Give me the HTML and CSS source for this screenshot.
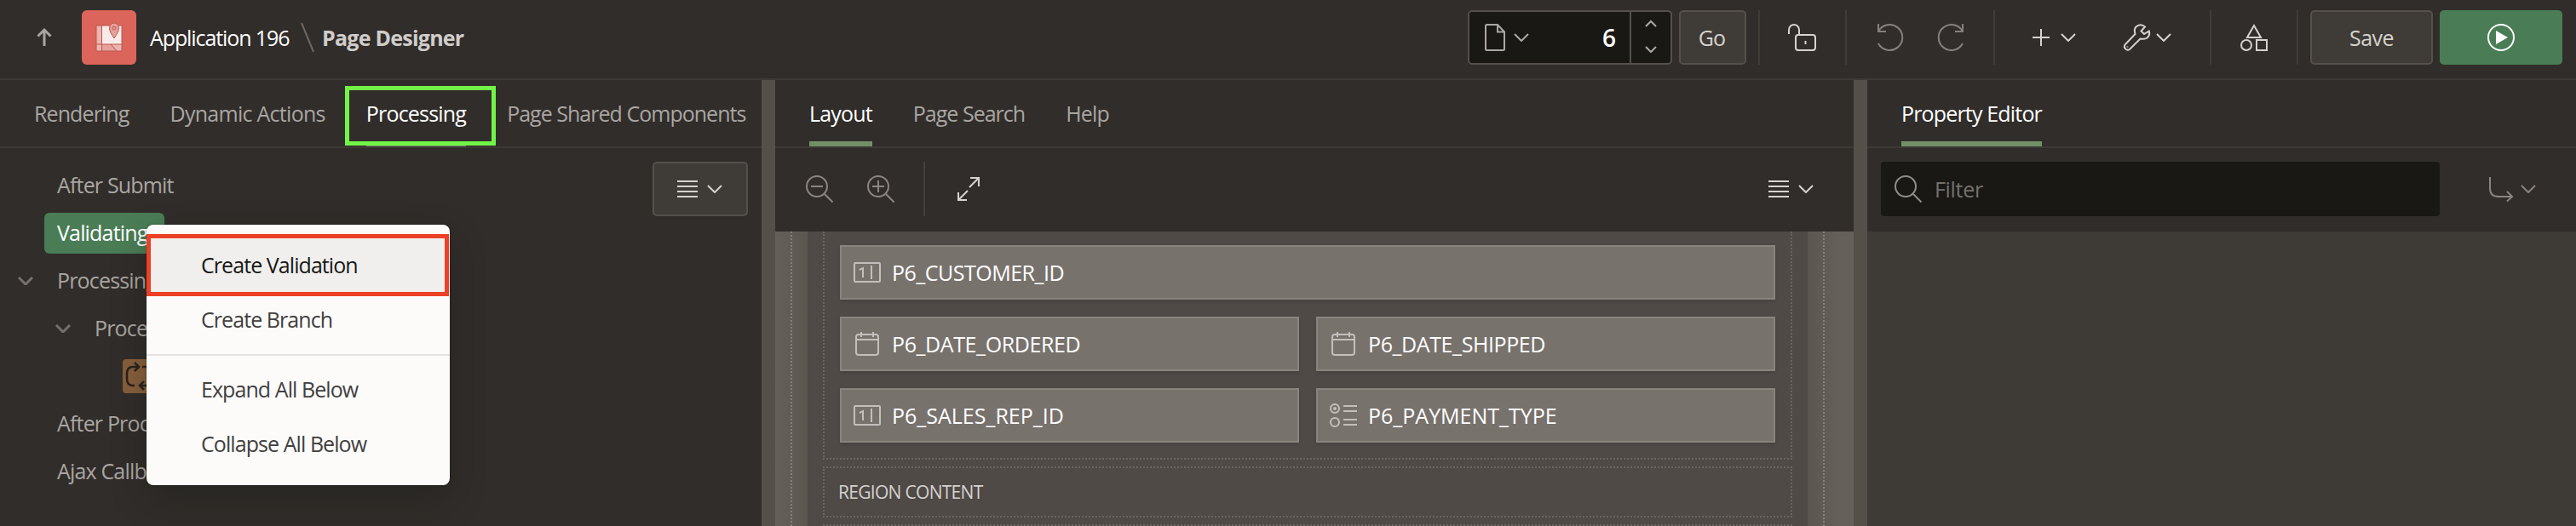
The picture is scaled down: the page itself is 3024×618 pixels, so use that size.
FILE: index.html
```html
<!DOCTYPE html>
<html lang="en">
<head>
<meta charset="utf-8">
<title>Page Designer</title>
<link rel="stylesheet" href="styles.css">
</head>
<body>
<svg class="defs" aria-hidden="true">
  <symbol id="chevron" viewBox="0 0 18 10"><path d="M1 1l8 8 8-8"/></symbol>
  <symbol id="menu" viewBox="0 0 24 20"><path d="M0 1h24M0 7h24M0 13h24M0 19h24"/></symbol>
  <symbol id="number" viewBox="0 0 32 24"><rect x="1" y="1" width="30" height="22" rx="1"/><path d="M7 9l4-2v11M21 4v16"/></symbol>
  <symbol id="calendar" viewBox="0 0 28 28"><rect x="1" y="3" width="26" height="24" rx="3"/><path d="M1 9h26M7 0v6M21 0v6"/></symbol>
  <symbol id="radios" viewBox="0 0 32 28"><circle cx="6" cy="6" r="5"/><circle cx="6" cy="6" r="1"/><circle cx="6" cy="22" r="5"/><path d="M16 3h16M16 9h16M16 19h16M16 25h16"/></symbol>
</svg>
<header class="header">
  <svg class="icon up" width="18" height="22" viewBox="0 0 18 22"><path d="M9 21V2M1.5 9.500L9 2l7.500 7.500"/></svg>
  <span class="app-icon">
    <svg width="32" height="36" viewBox="0 0 32 36">
      <path class="map-soft" d="M1 5h6v22H1zM1 27h30v8H1z"/><path class="map-light" d="M7 5h24v22H7z"/>
      <path class="map-mid" d="M8 27h10l8 8H8z"/>
      <path class="map-line" d="M1 5h30v30H1zM7.500 5v30M1 27h30M18 27l7 8"/>
      <path class="map-pin" d="M22 20c-3-5-5.500-8-5.500-12a5.500 6 0 0 1 11 0c0 4-2.500 7-5.500 12z"/><circle class="map-line" cx="22" cy="8" r="2"/>
    </svg>
  </span>
  <span class="crumb">Application 196</span>
  <svg class="slash" width="16" height="36" viewBox="0 0 16 36"><path d="M1 1l14 34"/></svg>
  <strong class="title">Page Designer</strong>
  <div class="tools">
    <div class="page-picker">
      <div class="page-field">
        <svg class="icon" width="24" height="32" viewBox="0 0 24 32"><path d="M1 2.500Q1 1 2.500 1H15l8 8.500v20q0 1.500-1.500 1.500h-19Q1 31 1 29.500zM15 1v8.500h8"/></svg>
        <svg class="icon" width="18" height="10"><use href="#chevron"/></svg>
        <span class="page-number">6</span>
      </div>
      <div class="stepper">
        <svg class="icon" width="14" height="8" viewBox="0 0 14 8"><path d="M1 7l6-6 6 6"/></svg>
        <svg class="icon" width="14" height="8" viewBox="0 0 14 8"><path d="M1 1l6 6 6-6"/></svg>
      </div>
    </div>
    <span class="button go">Go</span>
    <div class="group lock">
      <svg class="icon" width="34" height="32" viewBox="0 0 34 32"><path d="M1 12V7a6 6 0 0 1 12 0v6M20.500 20v4"/><rect x="9" y="13" width="23" height="18" rx="3"/></svg>
    </div>
    <div class="group history">
      <svg class="icon" width="32" height="32" viewBox="0 0 32 32"><path d="M2 0v9h9M2 9A15 15 0 1 1 2 23"/></svg>
      <svg class="icon" width="32" height="32" viewBox="0 0 32 32"><path d="M30 0v9h-9M30 9a15 15 0 1 0 0 14"/></svg>
    </div>
    <div class="group create">
      <svg class="icon" width="20" height="20" viewBox="0 0 20 20"><path d="M10 0v20M0 10h20"/></svg>
      <svg class="icon" width="18" height="10"><use href="#chevron"/></svg>
      <svg class="icon wrench" width="33" height="32" viewBox="0 0 33 32"><path d="M26 3.500c-3-3-7.500-3-10.500 0-2 2-2 5-1 8.500L2.500 24.500a4 4 0 0 0 5.500 5.500l12.500-12.500c4 .8 7 .5 9-2 1.800-2 2-4.500 1.300-7L25 12l-3.500-3.500zM5.500 26.500v1"/></svg>
      <svg class="icon" width="18" height="10"><use href="#chevron"/></svg>
    </div>
    <div class="group shapes">
      <svg class="icon" width="32" height="32" viewBox="0 0 32 32"><path d="M16 2l8 14H8zM19 19h12v12H19z"/><circle cx="7" cy="25" r="6"/></svg>
    </div>
    <div class="group end">
      <span class="button save">Save</span>
      <span class="button run"><svg class="icon" width="32" height="32" viewBox="0 0 32 32"><circle cx="16" cy="16" r="15"/><path class="solid" d="M10 8l14 8-14 8z"/></svg></span>
    </div>
  </div>
</header>
<main class="workspace">
  <section class="panel left">
    <nav class="tabs">
      <span class="tab t-rendering">Rendering</span><span class="tab t-dynamic">Dynamic Actions</span><span class="tab active t-processing">Processing<i class="callout"></i></span><span class="tab t-shared">Page Shared Components</span>
    </nav>
    <div class="tree-area">
      <div class="tree">
        <div class="node"><span class="label">After Submit</span></div>
        <div class="node"><span class="label selected">Validating</span></div>
        <div class="node"><svg class="icon" width="18" height="10"><use href="#chevron"/></svg><span class="label">Processing</span></div>
        <div class="node child"><svg class="icon" width="18" height="10"><use href="#chevron"/></svg><span class="label">Processes</span></div>
        <div class="node leaf"><span class="process"><svg class="icon" width="40" height="40" viewBox="0 0 40 40"><path d="M14 31h-2q-7 0-7-8v-6q0-8 7-8h7M14 4l5 5-5 5M23 9h5q7 0 7 8v6q0 8-7 8h-7M25 26l-5 5 5 5"/></svg></span></div>
        <div class="node"><span class="label">After Processing</span></div>
        <div class="node"><span class="label">Ajax Callback</span></div>
      </div>
      <span class="button tree-menu"><svg class="icon" width="24" height="20"><use href="#menu"/></svg><svg class="icon" width="18" height="10"><use href="#chevron"/></svg></span>
    </div>
    <div class="context-menu">
      <div class="menu-item hover">Create Validation</div>
      <div class="menu-item">Create Branch</div>
      <div class="separator"></div>
      <div class="menu-item">Expand All Below</div>
      <div class="menu-item">Collapse All Below</div>
    </div>
  </section>
  <div class="splitter"></div>
  <section class="panel center">
    <nav class="tabs"><span class="tab active">Layout</span><span class="tab t-search">Page Search</span><span class="tab">Help</span></nav>
    <div class="toolbar">
      <svg class="icon dim" width="32" height="32" viewBox="0 0 32 32"><circle cx="13" cy="13" r="12"/><path d="M22 22l9.500 9.500M6 13h14"/></svg>
      <svg class="icon dim" width="32" height="32" viewBox="0 0 32 32"><circle cx="13" cy="13" r="12"/><path d="M22 22l9.500 9.500M6 13h14M13 6v14"/></svg>
      <span class="rule"></span>
      <svg class="icon" width="28" height="28" viewBox="0 0 28 28"><path d="M16 1h10v10M26 1L15 12M2 18v9h10M2 27l11-11"/></svg>
      <span class="layout-menu"><svg class="icon" width="24" height="20"><use href="#menu"/></svg><svg class="icon" width="18" height="10"><use href="#chevron"/></svg></span>
    </div>
    <div class="canvas">
      <div class="gutter"></div>
      <div class="page">
        <div class="region items">
          <div class="item wide"><svg class="icon" width="32" height="24"><use href="#number"/></svg><span class="i-customer">P6_CUSTOMER_ID</span></div>
          <div class="item"><svg class="icon cal" width="28" height="28"><use href="#calendar"/></svg><span>P6_DATE_ORDERED</span></div>
          <div class="item"><svg class="icon cal" width="28" height="28"><use href="#calendar"/></svg><span>P6_DATE_SHIPPED</span></div>
          <div class="item"><svg class="icon" width="32" height="24"><use href="#number"/></svg><span class="i-loose">P6_SALES_REP_ID</span></div>
          <div class="item"><svg class="icon" width="32" height="28"><use href="#radios"/></svg><span class="i-loose">P6_PAYMENT_TYPE</span></div>
        </div>
        <div class="region content">REGION CONTENT</div>
        <div class="region next"></div>
      </div>
      <div class="gutter right"></div>
    </div>
  </section>
  <div class="splitter"></div>
  <section class="panel property">
    <nav class="tabs"><span class="tab active">Property Editor</span></nav>
    <div class="toolbar filter-bar">
      <div class="filter"><svg class="icon" width="32" height="32" viewBox="0 0 32 32"><circle cx="13" cy="13" r="12"/><path d="M22 22l9.500 9.500"/></svg><span>Filter</span></div>
      <svg class="icon dim" width="28" height="28" viewBox="0 0 28 28"><path d="M1 0v13q0 10 10 10h16M21 17l6 6-6 5.500"/></svg>
      <svg class="icon dim go-chevron" width="18" height="10"><use href="#chevron"/></svg>
    </div>
  </section>
</main>
</body>
</html>
```
FILE: styles.css
```css
*, *::before, *::after { box-sizing: border-box; }
body {
  margin: 0;
  height: 618px;
  overflow: hidden;
  display: flex;
  flex-direction: column;
  background: #312d2a;
  color: #fff;
  font: 470 25px/1.36 "Open Sans", "Noto Sans", sans-serif;
  letter-spacing: -0.83px;
  white-space: nowrap;
}
.defs { position: absolute; width: 0; height: 0; }
.icon { flex: none; display: block; fill: none; stroke: #d5d2cf; stroke-width: 2; overflow: visible; }
.icon.dim { stroke: #8b8581; }

.header {
  flex: none;
  display: flex;
  align-items: center;
  height: 94px;
  padding: 0 16px 4px 43px;
  border-bottom: 2px solid #3d3935;
}
.icon.up { stroke: #a9a5a2; stroke-width: 3; }
.app-icon {
  display: flex;
  justify-content: center;
  padding-top: 13px;
  width: 64px;
  height: 64px;
  margin: 0 16px 0 35px;
  border-radius: 6px;
  background: #db655b;
}
.map-soft { fill: #ebb5b0; }
.map-light { fill: #f8ebe9; }
.map-mid { fill: #e6a19b; }
.map-line { fill: none; stroke: #bd564e; }
.map-pin { fill: #e6a09a; stroke: #bd564e; }
.crumb { width: 162px; letter-spacing: -1.1px; margin-right: 15px; }
.slash { fill: none; stroke: #6d6863; stroke-width: 2; margin-right: 9px; }
.button { padding-bottom: 2px; }
.title { font-weight: 700; letter-spacing: -0.75px; color: #d0cdca; }
.tools { display: flex; align-items: center; height: 64px; margin-left: auto; }
.page-picker {
  display: flex;
  width: 240px;
  height: 64px;
  border: 2px solid #55504b;
  border-radius: 5px;
  background: #191815;
}
.page-picker .icon { stroke: #aca8a4; }
.page-field { display: flex; align-items: center; width: 190px; padding: 0 16px 0 18px; border-right: 2px solid #55504b; }
.page-field .icon + .icon { margin-left: 10px; }
.page-number { margin-left: auto; font-size: 28px; font-weight: 550; letter-spacing: 0; }
.stepper { flex: 1; display: flex; flex-direction: column; align-items: center; justify-content: space-between; padding: 10px 0 12px; }
.button {
  display: flex;
  align-items: center;
  justify-content: center;
  height: 64px;
  border: 2px solid #55504b;
  border-radius: 5px;
  background: #3f3b36;
  color: #d5d2cf;
}
.button.go { width: 79px; margin: 0 14px 0 8px; padding: 0 2px 0 0; }
.group { display: flex; align-items: center; height: 64px; border-left: 2px solid #403c38; }
.group.lock { width: 102px; padding-left: 33px; }
.group.history { width: 174px; padding-left: 35px; gap: 39px; }
.group.history .icon { stroke: #85807c; }
.group.create { width: 254px; padding-left: 44px; gap: 13px; }
.group.create .wrench { margin-left: 42px; }
.group.create .wrench + .icon { margin-left: -7px; }
.group.shapes { width: 102px; padding-left: 34px; }
.group.end { padding-left: 14px; gap: 8px; }
.button.save { width: 144px; letter-spacing: -0.5px; padding-bottom: 0; }
.button.run { width: 144px; padding: 0; border: 0; background: #4a7d56; }
.run .icon { stroke: #fff; }
.run .solid { fill: #fff; stroke: none; }

.workspace { flex: 1; display: flex; min-height: 0; }
.panel { display: flex; flex-direction: column; }
.panel.left { position: relative; width: 894px; }
.panel.center { width: 1266px; }
.panel.property { flex: 1; background: #3e3a35; }
.splitter { width: 16px; background: #554f4a; }
.tabs {
  flex: none;
  display: flex;
  gap: 48px;
  height: 80px;
  padding-left: 40px;
  border-bottom: 2px solid #3d3935;
  background: #312d2a;
}
.tab { position: relative; height: 78px; padding-top: 22px; color: #a9a6a3; border-bottom: 6px solid transparent; }
.tab.active { color: #fff; border-bottom-color: #728f68; }
.tab.t-rendering { letter-spacing: -0.9px; }
.tab.t-dynamic { letter-spacing: -0.72px; }
.tab.t-processing { letter-spacing: -0.8px; }
.tab.t-shared, .tab.t-search { letter-spacing: -0.98px; }
.callout { position: absolute; left: -25px; top: 7px; width: 177px; height: 70px; border: 5px solid #72f548; }

.tree-area { flex: 1; display: flex; justify-content: space-between; align-items: flex-start; padding: 16px 16px 0 21px; color: #aaa6a2; }
.node { display: flex; align-items: center; height: 56px; }
.node .icon { stroke: #75706b; stroke-width: 3; margin-right: 13px; }
.node .label { padding: 0 14px 1px 15px; height: 48px; line-height: 47px; border-radius: 6px; }
.node .label:first-child { margin-left: 31px; }
.node .selected { width: 141px; background: #4a7d56; color: #fff; }
.node.child { padding-left: 44px; }
.node.leaf { padding-left: 123px; }
.node.leaf .icon { stroke: #2a231e; stroke-width: 2.5; margin: 0; }
.process { width: 40px; height: 40px; border-radius: 4px; background: #875f3d; }
.button.tree-menu { width: 112px; gap: 11px; padding: 0 2px 0 0; }

.context-menu {
  position: absolute;
  left: 172px;
  top: 170px;
  width: 356px;
  height: 306px;
  padding-top: 16px;
  border-radius: 8px;
  background: #fcfbfa;
  color: #41403e;
  box-shadow: 0 16px 40px rgba(20, 22, 18, 0.3), 0 0 3px rgba(0, 0, 0, 0.3);
}
.menu-item { height: 64px; padding: 14px 0 0 64px; letter-spacing: -0.93px; }
.menu-item.hover { position: relative; background: #f0efed; color: #191815; }
.menu-item.hover::after { content: ""; position: absolute; left: 0; top: -5px; width: 355px; height: 73px; border: 5px solid #ec4126; }
.separator { height: 2px; margin: 8px 0; background: #e3e2e0; }

.toolbar { flex: none; display: flex; align-items: center; height: 98px; padding: 0 47px 2px 36px; background: #312d2a; }
.toolbar .icon + .icon { margin-left: 40px; }
.toolbar .rule { width: 2px; height: 64px; margin: 0 37px 0 34px; background: #433f3b; }
.layout-menu { display: flex; align-items: center; margin-left: auto; }
.layout-menu .icon + .icon { margin-left: 11px; }

.canvas { flex: 1; display: flex; min-height: 0; overflow: hidden; }
.gutter { width: 38px; padding-left: 18px; background: linear-gradient(90deg, #66605b, #5c5651); }
.gutter::before { content: ""; display: block; width: 2px; height: 100%; background: repeating-linear-gradient(#85807b 0 2px, transparent 2px 4px); }
.gutter.right { width: 54px; background: linear-gradient(90deg, #5c5651, #66605b 70%); }
.page { width: 1174px; padding: 0 18px; background: #4f4a46; }
.region { border: 2px dotted #6b6560; }
.region.items {
  display: grid;
  grid-template-columns: 1fr 1fr;
  gap: 20px;
  height: 268px;
  padding: 16px 18px;
  border-top: 0;
  align-content: start;
}
.item {
  display: flex;
  align-items: center;
  height: 64px;
  padding-left: 14px;
  border: 2px solid #8a847f;
  background: #78726d;
  box-shadow: 0 2px 4px rgba(0, 0, 0, 0.12);
  font-weight: 500;
  letter-spacing: -0.4px;
}
.item.wide { grid-column: span 2; }
.item .icon { stroke: #c3bfbb; margin-right: 13px; }
.item .cal { margin-left: 2px; margin-right: 15px; }
.i-customer { letter-spacing: -0.5px; }
.i-loose { letter-spacing: 0; }
.region.content { height: 60px; margin-top: 8px; padding: 14px 0 0 16px; font-size: 21px; letter-spacing: -0.7px; color: #d5d2cf; }
.region.next { height: 60px; margin-top: 8px; }

.filter-bar { padding: 0 0 2px 16px; }
.filter { display: flex; align-items: center; width: 656px; height: 64px; margin-right: 58px; padding-left: 16px; border-radius: 4px; background: #191815; color: #75716d; letter-spacing: -0.3px; }
.filter .icon { stroke: #918d89; margin-right: 15px; }
.toolbar .go-chevron.icon { margin-left: 9px; }
```
